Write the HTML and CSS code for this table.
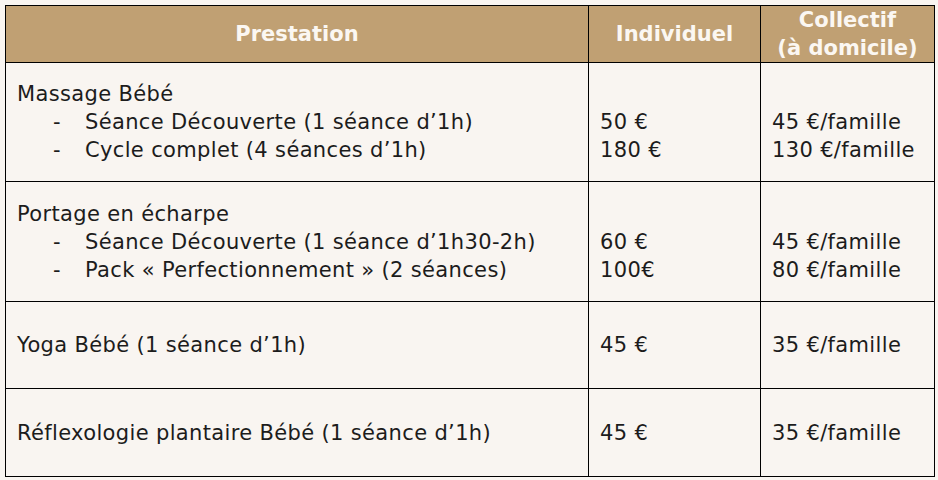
FILE: index.html
```html
<!DOCTYPE html>
<html lang="fr">
<head>
<meta charset="utf-8">
<link rel="stylesheet" href="styles.css">
</head>
<body>
<table class="tarifs">
  <colgroup>
    <col class="c1"><col class="c2"><col class="c3">
  </colgroup>
  <thead>
    <tr class="head">
      <th>Prestation</th>
      <th>Individuel</th>
      <th>Collectif<br>(à domicile)</th>
    </tr>
  </thead>
  <tbody>
    <tr class="r1">
      <td>
        <div class="title">Massage Bébé</div>
        <div class="item"><span class="dash">-</span><span>Séance Découverte (1 séance d’1h)</span></div>
        <div class="item"><span class="dash">-</span><span>Cycle complet (4 séances d’1h)</span></div>
      </td>
      <td><div class="line">&nbsp;</div><div class="line">50 €</div><div class="line">180 €</div></td>
      <td><div class="line">&nbsp;</div><div class="line">45 €/famille</div><div class="line">130 €/famille</div></td>
    </tr>
    <tr class="r2">
      <td>
        <div class="title">Portage en écharpe</div>
        <div class="item"><span class="dash">-</span><span>Séance Découverte (1 séance d’1h30-2h)</span></div>
        <div class="item"><span class="dash">-</span><span>Pack « Perfectionnement » (2 séances)</span></div>
      </td>
      <td><div class="line">&nbsp;</div><div class="line">60 €</div><div class="line">100€</div></td>
      <td><div class="line">&nbsp;</div><div class="line">45 €/famille</div><div class="line">80 €/famille</div></td>
    </tr>
    <tr class="r3">
      <td>Yoga Bébé (1 séance d’1h)</td>
      <td>45 €</td>
      <td>35 €/famille</td>
    </tr>
    <tr class="r4">
      <td>Réflexologie plantaire Bébé (1 séance d’1h)</td>
      <td>45 €</td>
      <td>35 €/famille</td>
    </tr>
  </tbody>
</table>
</body>
</html>
```

FILE: styles.css
```css
html, body {
  margin: 0;
  background: #f9f5f1;
}
body {
  padding: 5px;
  font-family: "DejaVu Sans", sans-serif;
  font-size: 21px;
  line-height: 28px;
  letter-spacing: 0.35px;
  color: #1c1c1c;
}
.tarifs {
  border-collapse: collapse;
  table-layout: fixed;
  width: 929px;
}
.c1 { width: 583px; }
.c2 { width: 172px; }
.c3 { width: 174px; }
.tarifs th, .tarifs td {
  border: 1px solid #000;
  padding: 0 11px;
  vertical-align: middle;
  text-align: left;
}
.tarifs th {
  background: #c0a073;
  color: #fbf7f2;
  font-weight: 700;
  letter-spacing: 0;
  text-align: center;
}
.head { height: 57px; }
.r1 { height: 119px; }
.r2 { height: 120px; }
.r3 { height: 87px; }
.r4 { height: 88px; }
.item {
  display: flex;
}
.dash {
  width: 68px;
  padding-left: 36px;
  box-sizing: border-box;
}
```
